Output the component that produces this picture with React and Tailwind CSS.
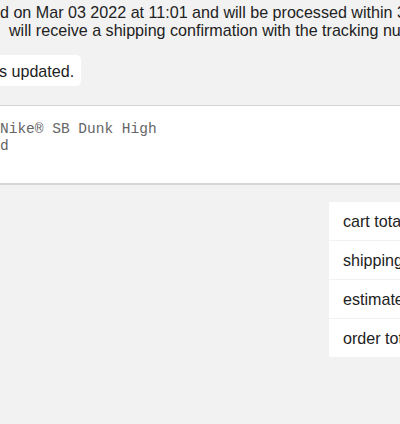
const TOTALS = ["cart total", "shipping", "estimated tax", "order total"];

export default function App() {
  return (
    <div className="w-[400px] h-[424px] overflow-hidden bg-[#f2f2f2] text-[#222] font-['Liberation_Sans',Arial,sans-serif] text-[16.1px] leading-[18px]">
      <div className="pt-[3px] whitespace-nowrap">
        <div>d on Mar 03 2022 at 11:01 and will be processed within 3 business days.</div>
        <div className="pl-[9px]">will receive a shipping confirmation with the tracking number.</div>
      </div>

      <div className="mt-[16px] flex">
        <div className="bg-white rounded-r-[5px] h-[31px] flex items-center pl-0 pr-[7px] -ml-[1px] whitespace-nowrap">
          s updated.
        </div>
      </div>

      <div className="mt-[19px] -mx-2 bg-white border-t border-b-2 border-[#d6d6d6] h-[80px] pt-[15px] px-2 font-['Liberation_Mono','Courier_New',monospace] text-[14.5px] leading-[17px] text-[#666] whitespace-nowrap">
        <div>Nike® SB Dunk High</div>
        <div>d</div>
      </div>

      <div className="mt-[17px] flex justify-end">
        <div className="w-[71px] flex flex-col gap-px">
          {TOTALS.map(label => (
            <div key={label} className="bg-white h-[38px] flex items-center pl-[14px] whitespace-nowrap">
              {label}
            </div>
          ))}
        </div>
      </div>
    </div>
  );
}
